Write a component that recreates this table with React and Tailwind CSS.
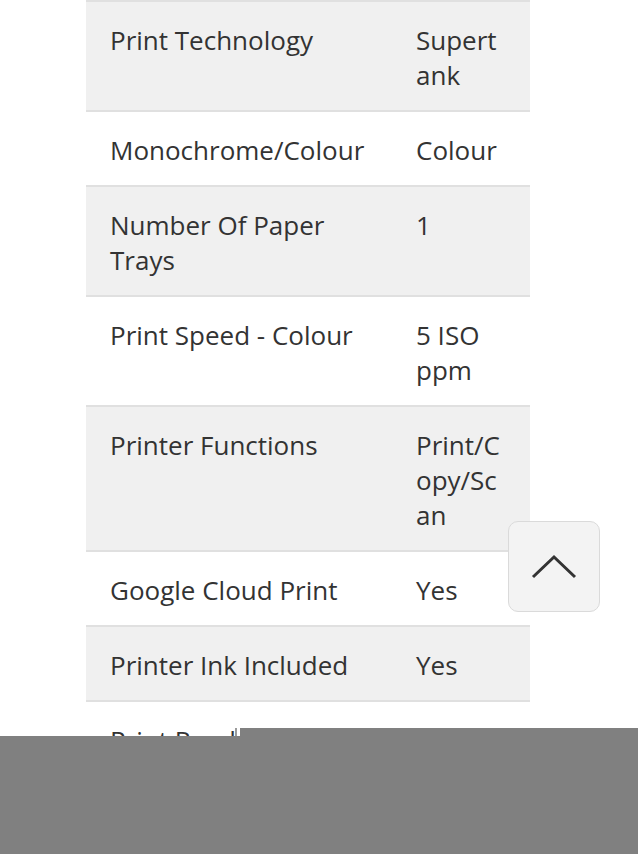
const specs = [
  { label: 'Print Technology', value: 'Supertank' },
  { label: 'Monochrome/Colour', value: 'Colour' },
  { label: 'Number Of Paper Trays', value: '1' },
  { label: 'Print Speed - Colour', value: '5 ISO ppm' },
  { label: 'Printer Functions', value: 'Print/Copy/Scan' },
  { label: 'Google Cloud Print', value: 'Yes' },
  { label: 'Printer Ink Included', value: 'Yes' },
  { label: 'Print Ready Resolution', value: '5760 x 1440 dpi' },
];

function SpecRow({ label, value, shaded }) {
  return (
    <div className={`flex border-b-2 border-[#e0e0e0] ${shaded ? 'bg-[#f0f0f0]' : 'bg-white'}`}>
      <div className="w-[306px] shrink-0 pl-6 pr-4 pt-[21px] pb-[17px]">{label}</div>
      <div className="w-[138px] pl-6 pr-[26px] pt-[21px] pb-[17px] break-words">{value}</div>
    </div>
  );
}

export default function App() {
  return (
    <div className="relative h-[854px] w-[638px] overflow-hidden bg-white font-['Open_Sans',sans-serif] text-[26px] leading-[35px] text-[#333333]">
      <div className="ml-[86px] w-[444px] border-t-2 border-[#e0e0e0]">
        {specs.map((s, i) => (
          <SpecRow key={s.label} label={s.label} value={s.value} shaded={i % 2 === 0} />
        ))}
      </div>

      <button className="absolute left-[508px] top-[521px] flex h-[91px] w-[92px] items-center justify-center rounded-[10px] border border-[#dadada] bg-[#f3f3f3]">
        <svg width="46" height="26" viewBox="0 0 46 26" fill="none">
          <path d="M2 23 L23 3 L44 23" stroke="#333333" strokeWidth="3" />
        </svg>
      </button>

      <div className="absolute left-[235px] top-[728px] h-[8px] w-[2px] bg-[#9a9a9a]" />
      <div className="absolute left-[240px] right-0 top-[728px] h-[8px] bg-[#808080]" />
      <div className="absolute inset-x-0 top-[736px] bottom-0 bg-[#808080]" />
    </div>
  );
}
